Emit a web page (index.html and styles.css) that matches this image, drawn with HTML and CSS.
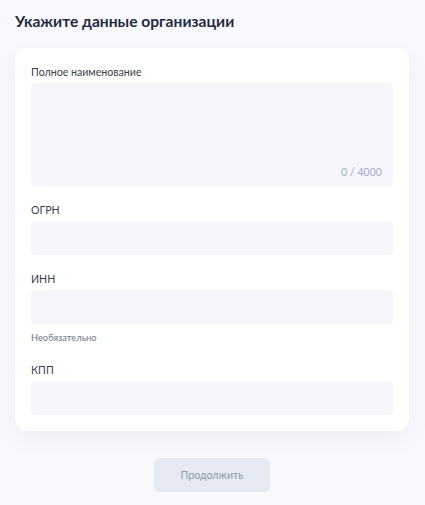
FILE: index.html
```html
<!DOCTYPE html>
<html lang="ru">

<head>
    <meta charset="UTF-8">
    <meta name="viewport" content="width=device-width, initial-scale=1.0">
    <title>Данные организации</title>
    <link rel="stylesheet" href="styles.css">
</head>

<body>

<div class="page">
    <h1 class="page-title">Укажите данные организации</h1>

    <div class="card">
        <div class="field">
            <label class="field-label" for="fullName">Полное наименование</label>
            <div class="textarea-wrap">
                <textarea id="fullName" class="input textarea" maxlength="4000"></textarea>
                <span class="counter">0 / 4000</span>
            </div>
        </div>

        <div class="field">
            <label class="field-label" for="ogrn">ОГРН</label>
            <input id="ogrn" class="input" type="text">
        </div>

        <div class="field">
            <label class="field-label" for="inn">ИНН</label>
            <input id="inn" class="input" type="text">
            <div class="field-hint">Необязательно</div>
        </div>

        <div class="field">
            <label class="field-label" for="kpp">КПП</label>
            <input id="kpp" class="input" type="text">
        </div>
    </div>

    <div class="actions">
        <button class="btn-next" disabled>Продолжить</button>
    </div>
</div>

</body>
</html>
```

FILE: styles.css
```css
body {
    font-family: Lato, "Noto Sans", sans-serif;
    background-color: #f8f9fd;
    color: #1f2b3d;
    margin: 0;
}

.page {
    padding: 0 16px 0 15px;
}

.page-title {
    font-size: 15.6px;
    font-weight: 700;
    line-height: 24px;
    margin: 0;
    padding: 9px 0 15px;
}

.card {
    background-color: #fff;
    border-radius: 12px;
    box-shadow: 0 8px 24px rgba(40, 60, 110, 0.06);
    padding: 16px 16px 16px;
}

.field + .field {
    margin-top: 16px;
}

.field-label {
    display: block;
    font-size: 10.6px;
    line-height: 16px;
    color: #3a3f48;
    margin-bottom: 3px;
}

.input {
    display: block;
    box-sizing: border-box;
    width: 100%;
    height: 34px;
    border: none;
    border-radius: 4px;
    background-color: #f5f6fa;
    font-family: inherit;
    outline: none;
}

.textarea-wrap {
    position: relative;
}

.textarea {
    height: 103px;
    resize: none;
}

.counter {
    position: absolute;
    right: 11px;
    bottom: 8px;
    font-size: 10.6px;
    color: #a3abca;
}

.field-hint {
    font-size: 9.3px;
    line-height: 16px;
    color: #6b7683;
    margin-top: 6px;
}

.actions {
    display: flex;
    justify-content: center;
    padding-top: 27px;
}

.btn-next {
    width: 116px;
    height: 34px;
    border: none;
    border-radius: 6px;
    background-color: #e4e9f2;
    color: #8d99a9;
    font-family: inherit;
    font-size: 10.6px;
}
```
